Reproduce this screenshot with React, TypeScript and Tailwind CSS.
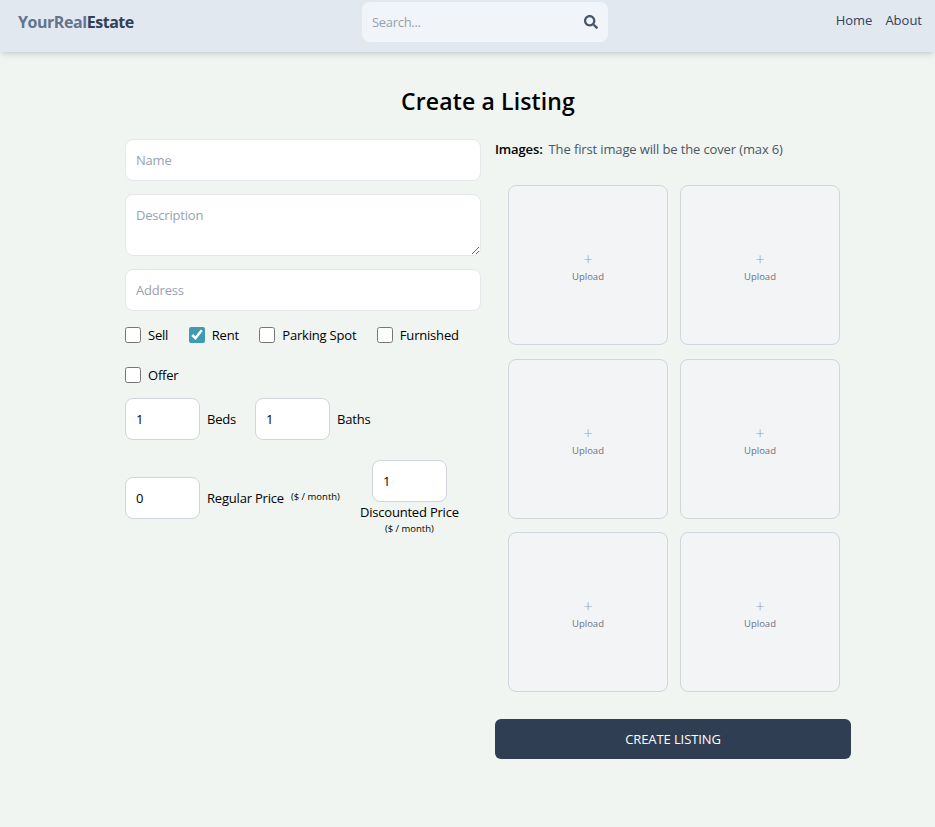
import { FaSearch } from "react-icons/fa";

const font = "font-['Open_Sans','Noto_Sans',sans-serif]";

const Field = ({ placeholder }: { placeholder: string }) => (
  <input
    placeholder={placeholder}
    className="w-full h-[42px] rounded-lg border border-gray-200 bg-white px-2.5 text-[13px] tracking-[-0.2px] outline-none placeholder:text-gray-400"
  />
);

const Check = ({ label, checked = false }: { label: string; checked?: boolean }) => (
  <label className="flex items-center gap-[7px] text-[13px] tracking-[-0.2px] text-black">
    <input type="checkbox" defaultChecked={checked} className="h-4 w-4 accent-[#3f9cb0]" />
    <span className="pt-[2px]">{label}</span>
  </label>
);

const NumberBox = ({ value }: { value: string }) => (
  <input
    defaultValue={value}
    className="h-[42px] w-[75px] rounded-lg border border-gray-300 bg-white px-2.5 text-[13px] text-black outline-none"
  />
);

const UploadBox = () => (
  <div className="flex h-40 w-40 flex-col items-center justify-center rounded-lg border border-gray-300 bg-gray-100 pt-[3px]">
    <span className="text-base font-light leading-5 text-gray-400">+</span>
    <span className="text-[9.5px] leading-[15px] text-gray-500">Upload</span>
  </div>
);

export default function App() {
  return (
    <div className={`min-h-[827px] bg-[#f0f5f1] ${font}`}>
      <header className="flex h-[52px] items-start bg-slate-200 pl-[18px] pr-[13px] shadow-md">
        <div className="mt-[12px] w-[344px] text-[16px] font-bold leading-5 tracking-[-0.45px]">
          <span className="text-slate-500">YourReal</span>
          <span className="text-slate-700">Estate</span>
        </div>
        <div className="mt-[2px] flex h-10 w-[246px] items-center justify-between rounded-lg bg-slate-100 px-[10px]">
          <span className="pt-[2px] text-[13px] tracking-[-0.3px] text-gray-400">Search...</span>
          <FaSearch className="h-[14px] w-[14px] text-slate-600" />
        </div>
        <nav className="ml-auto mt-[11px] flex gap-[13px] text-[13px] text-slate-700">
          <span>Home</span>
          <span>About</span>
        </nav>
      </header>

      <main className="ml-[125px] w-[726px]">
        <h1 className="mt-[33px] text-center text-[23px] font-semibold leading-8 tracking-[0.13px] text-black">Create a Listing</h1>
        <div className="mt-[22px] flex gap-[14px]">
          <div className="flex w-[356px] flex-col">
            <Field placeholder="Name" />
            <textarea
              placeholder="Description"
              className="mt-[13px] block h-[62px] w-full rounded-lg border border-gray-200 bg-white px-2.5 py-[10px] text-[13px] leading-5 tracking-[-0.2px] outline-none placeholder:text-gray-400"
            />
            <div className="mt-[13px]">
              <Field placeholder="Address" />
            </div>
            <div className="mt-[16px] flex h-4 items-center gap-[20.5px]">
              <Check label="Sell" />
              <Check label="Rent" checked />
              <Check label="Parking Spot" />
              <Check label="Furnished" />
            </div>
            <div className="mt-6 flex h-4 items-center">
              <Check label="Offer" />
            </div>
            <div className="mt-[15px] flex items-center gap-[7px] text-[13px] tracking-[-0.2px] text-black">
              <NumberBox value="1" />
              <span className="pt-[2px]">Beds</span>
              <div className="ml-[12px]">
                <NumberBox value="1" />
              </div>
              <span className="pt-[2px]">Baths</span>
            </div>
            <div className="mt-[20px] flex items-start text-[13px] tracking-[-0.2px] text-black">
              <div className="mt-[17px] flex items-center gap-[7px]">
                <NumberBox value="0" />
                <span className="pt-[2px]">Regular Price</span>
                <span className="-mt-[1px] text-[9.5px] tracking-[0px]">($ / month)</span>
              </div>
              <div className="ml-[20px] flex flex-col items-center">
                <NumberBox value="1" />
                <span className="leading-5">Discounted Price</span>
                <span className="pt-[1px] text-[9.5px] leading-3 tracking-[0px]">($ / month)</span>
              </div>
            </div>
          </div>

          <div className="w-[356px]">
            <p className="flex gap-[6px] text-[13px] leading-5 tracking-[-0.13px]">
              <span className="font-semibold text-black">Images:</span>
              <span className="text-gray-600">The first image will be the cover (max 6)</span>
            </p>
            <div className="ml-[13px] mt-[26px] grid w-[332px] grid-cols-2 gap-x-3 gap-y-[13.5px]">
              <UploadBox />
              <UploadBox />
              <UploadBox />
              <UploadBox />
              <UploadBox />
              <UploadBox />
            </div>
            <button className="mt-[27px] h-10 w-full rounded-md bg-[#2f3e52] pt-[2px] text-[13px] tracking-[-0.1px] text-white">CREATE LISTING</button>
          </div>
        </div>
      </main>
    </div>
  );
}
